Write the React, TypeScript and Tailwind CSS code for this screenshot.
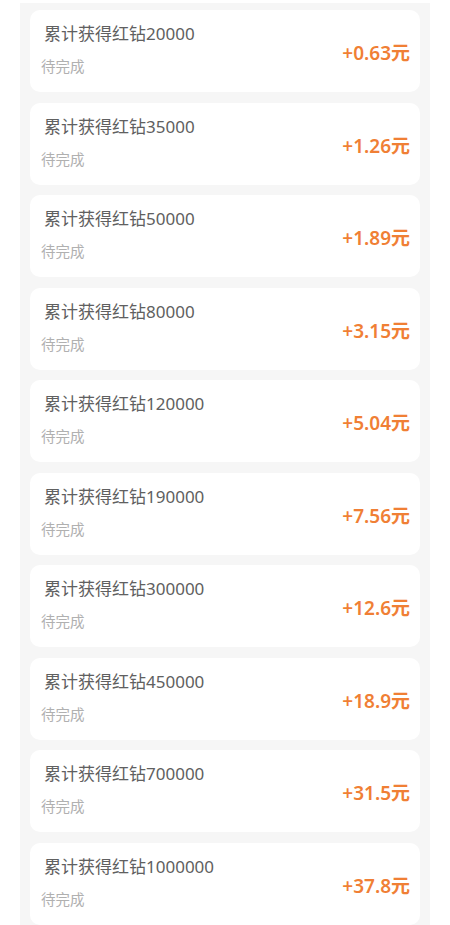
import React from 'react';

interface Task {
  target: string;
  reward: string;
}

const tasks: Task[] = [
  { target: '20000', reward: '+0.63元' },
  { target: '35000', reward: '+1.26元' },
  { target: '50000', reward: '+1.89元' },
  { target: '80000', reward: '+3.15元' },
  { target: '120000', reward: '+5.04元' },
  { target: '190000', reward: '+7.56元' },
  { target: '300000', reward: '+12.6元' },
  { target: '450000', reward: '+18.9元' },
  { target: '700000', reward: '+31.5元' },
  { target: '1000000', reward: '+37.8元' },
];

const font = { fontFamily: '"Noto Sans", "Noto Sans CJK SC", sans-serif' };

const App: React.FC = () => {
  return (
    <div className="w-[450px] h-[925px] bg-white overflow-hidden" style={font}>
      <div className="mx-[20px] mt-[3px] h-[922px] bg-[#f6f6f6] px-[10px] pt-[7px] flex flex-col gap-[10.5px]">
        {tasks.map((task, index) => (
          <div
            key={index}
            className="h-[82px] shrink-0 bg-white rounded-[10px] flex items-center justify-between pl-[11px] pr-[10px]"
          >
            <div className="flex flex-col self-start">
              <span className="mt-[12px] pl-[3px] text-[17px] leading-[24px] text-[#606060]">
                累计获得红钻{task.target}
              </span>
              <span className="mt-[10px] text-[14.5px] leading-[20px] text-[#b0b0b0]">待完成</span>
            </div>
            <span className="mt-[4px] text-[19px] font-semibold leading-[24px] text-[#f07f35]">
              {task.reward}
            </span>
          </div>
        ))}
      </div>
    </div>
  );
};

export default App;
